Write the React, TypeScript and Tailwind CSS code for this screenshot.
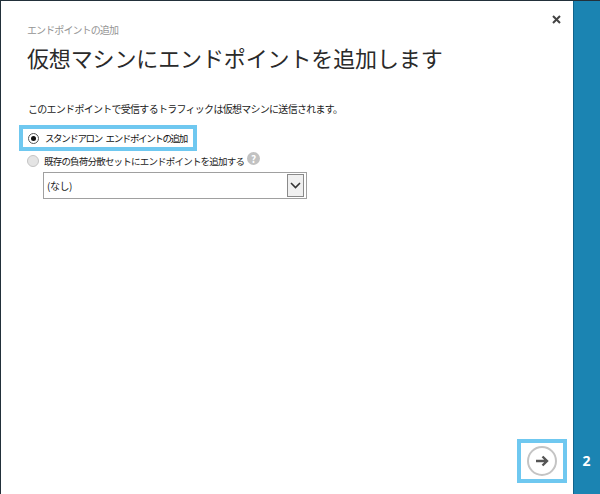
export default function App() {
  const font = { fontFamily: '"Noto Sans CJK JP", "Noto Sans", sans-serif' };
  return (
    <div style={font} className="flex h-[494px] w-[600px] overflow-hidden border-t border-l border-[#22303a] bg-white text-[#222]">
      <main className="flex min-w-0 flex-1 flex-col pl-[26px] pr-[6px]">
        <div className="flex h-[20px] justify-end pt-[14px] pr-[6px]">
          <svg width="9" height="9" viewBox="0 0 9 9" className="shrink-0">
            <path d="M1 1 8 8M8 1 1 8" stroke="#444" strokeWidth="2" />
          </svg>
        </div>
        <p className="mt-[2px] text-[10px] leading-[14px] tracking-[-0.9px] text-[#949494]">エンドポイントの追加</p>
        <h1 className="mt-[4px] text-[22px] leading-[32px] font-normal tracking-[-0.13px] text-[#2a2a2a]">仮想マシンにエンドポイントを追加します</h1>
        <p className="mt-[29px] pl-[1px] text-[10px] leading-[14px] tracking-[-0.72px]">このエンドポイントで受信するトラフィックは仮想マシンに送信されます。</p>
        <div className="mt-[9px] -ml-[8px] flex h-[26px] w-[178px] items-center gap-[6px] border-[4px] border-[#6fc8f0] pl-[5px]">
          <span className="flex h-[11px] w-[11px] shrink-0 items-center justify-center rounded-full border border-[#555]">
            <span className="h-[5px] w-[5px] rounded-full bg-[#111]" />
          </span>
          <span className="whitespace-nowrap text-[9.5px] leading-[14px] tracking-[-1.38px] [word-spacing:3px] text-[#111]">スタンドアロン エンドポイントの追加</span>
        </div>
        <div className="mt-[2px] flex h-[16px] items-center gap-[5px]">
          <span className="h-[12px] w-[12px] shrink-0 rounded-full border border-[#c4c4c4] bg-[#e4e4e4]" />
          <span className="whitespace-nowrap text-[9.5px] leading-[14px] tracking-[-0.8px]">既存の負荷分散セットにエンドポイントを追加する</span>
          <span className="-mt-[5px] -ml-[2px] flex h-[13px] w-[13px] shrink-0 items-center justify-center rounded-full bg-[#c2c2c2] text-[10px] leading-none font-bold text-white">?</span>
        </div>
        <div className="mt-[3px] ml-[16px] flex h-[27px] w-[264px] items-center justify-between border border-[#a0a0a0] pr-[2px] pl-[3px]">
          <span className="text-[10px] leading-[14px] tracking-[-0.5px]">(なし)</span>
          <span className="flex h-[23px] w-[17px] items-center justify-center border border-[#8a8a8a] bg-[#f0f0f0]">
            <svg width="11" height="7" viewBox="0 0 11 7">
              <path d="M1 1 5.5 5.5 10 1" fill="none" stroke="#333" strokeWidth="1.6" />
            </svg>
          </span>
        </div>
        <div className="mt-auto mb-[11px] flex justify-end">
          <button className="flex h-[44px] w-[50px] items-center justify-center border-[4px] border-[#6fc8f0] bg-white">
            <span className="flex h-[30px] w-[30px] items-center justify-center rounded-full border-2 border-[#c4c4c4]">
              <svg width="14" height="12" viewBox="0 0 14 12">
                <path d="M1 6H12M7.5 1.5 12 6 7.5 10.5" fill="none" stroke="#555" strokeWidth="2.4" />
              </svg>
            </span>
          </button>
        </div>
      </main>
      <aside className="flex w-[27px] shrink-0 flex-col justify-end border-l border-[#11648c] bg-[#1b84b2] pb-[24px]">
        <span className="-ml-[1px] text-center text-[14px] leading-[18px] font-bold text-white" style={{ fontFamily: '"Open Sans", sans-serif' }}>2</span>
      </aside>
    </div>
  );
}
